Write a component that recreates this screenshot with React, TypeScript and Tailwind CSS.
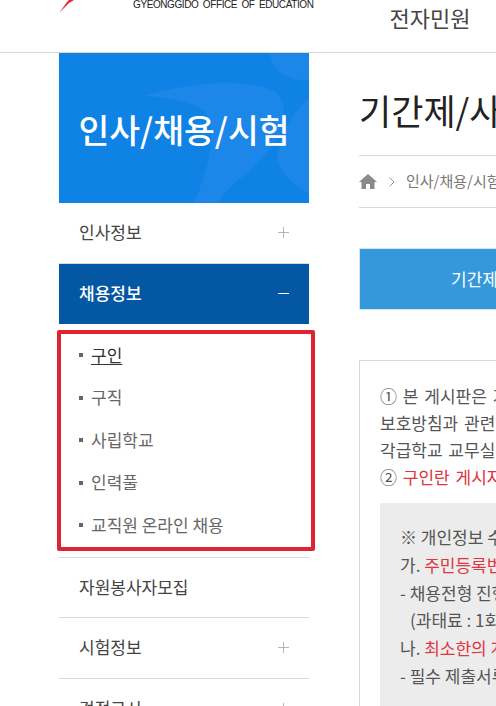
const font = "font-['Noto_Sans_CJK_KR','Liberation_Sans',sans-serif]";

const PlusIcon = () => (
  <svg width="11" height="11" viewBox="0 0 11 11" className="shrink-0">
    <path d="M0 5.5H11M5.5 0V11" stroke="#b5b5b5" strokeWidth="1" fill="none" />
  </svg>
);

const MinusIcon = () => (
  <svg width="11" height="11" viewBox="0 0 11 11" className="shrink-0">
    <path d="M0 5.5H11" stroke="#ffffff" strokeWidth="1" fill="none" />
  </svg>
);

const HomeIcon = () => (
  <svg width="18" height="15" viewBox="0 0 18 15" className="shrink-0">
    <path d="M9 0 L18 8 L15.5 8 L15.5 15 L11 15 L11 10 L7 10 L7 15 L2.5 15 L2.5 8 L0 8 Z" fill="#8a8a8a" />
  </svg>
);

const MenuRow = ({ label, plus = false }: { label: string; plus?: boolean }) => (
  <div className="flex h-[60.5px] items-center justify-between border-b border-[#d9d9d9] px-[20px] text-[17px] text-[#444]">
    <span className="pb-[2px]">{label}</span>
    {plus && <PlusIcon />}
  </div>
);

const subItems = ["구인", "구직", "사립학교", "인력풀", "교직원 온라인 채용"];

const Sidebar = () => (
  <aside className="w-[250px] shrink-0">
    <div className="relative flex h-[150px] items-center justify-center overflow-hidden bg-[#0f82e6] pt-[3px]">
      <svg width="250" height="150" viewBox="0 0 250 150" className="absolute left-0 top-0">
        <path d="M211 0 C213 18 228 28 250 27 L250 0 Z" fill="#1c87e8" />
        <path d="M85 43 C130 29 190 25 215 38 C230 48 228 75 212 95 C190 122 165 135 160 150 L135 150 C150 115 160 75 145 58 C130 47 105 44 85 43 Z" fill="#1c87e8" />
        <path d="M250 45 C232 60 220 85 218 105 C222 122 235 133 250 140 Z" fill="#1c87e8" />
      </svg>
      <span className="relative text-[33.5px] font-medium text-white">인사/채용/시험</span>
    </div>
    <MenuRow label="인사정보" plus />
    <div className="flex h-[60.5px] items-center justify-between bg-[#0457a3] px-[20px] text-[17px] font-medium text-white">
      <span className="pb-[2px]">채용정보</span>
      <MinusIcon />
    </div>
    <ul className="mt-[6px] -ml-[2px] w-[258px] rounded-[2px] border-[4px] border-[#df2330]">
      {subItems.map((item, i) => (
        <li key={item} className="flex h-[42.5px] items-center pl-[18px] text-[17px] text-[#666]">
          <span className="mr-[8px] h-[4px] w-[4px] bg-[#666]" />
          <span className={i === 0 ? "pb-[2px] text-[#333] underline underline-offset-2" : "pb-[2px]"}>{item}</span>
        </li>
      ))}
    </ul>
    <div className="mt-[6px] border-t border-[#d9d9d9]">
      <MenuRow label="자원봉사자모집" />
      <MenuRow label="시험정보" plus />
      <MenuRow label="검정고시" plus />
    </div>
  </aside>
);

const Main = () => (
  <main className="w-[800px] shrink-0 whitespace-nowrap">
    <h1 className="flex h-[102px] items-center pt-[12px] text-[35px] font-normal text-[#222]">기간제/사립교사 채용</h1>
    <div className="flex h-[53px] items-center border-y border-[#d9d9d9] text-[15px] text-[#777]">
      <HomeIcon />
      <svg width="6" height="10" viewBox="0 0 6 10" className="ml-[12px] mr-[11px]">
        <path d="M0.5 0.5L5 5L0.5 9.5" stroke="#999" strokeWidth="1" fill="none" />
      </svg>
      <span>인사/채용/시험</span>
    </div>
    <div className="mt-[40px] flex h-[62px] items-center border border-[#cfe6f5] bg-[#3498db] pl-[91px] text-[17px] text-white">
      기간제 교사 채용 공고
    </div>
    <div className="mt-[50px] border border-[#d9d9d9] px-[20px] pt-[21px] text-[17px] leading-[27px] text-[#555] [word-spacing:2px]">
      <p>① 본 게시판은 기간제 교사 채용 공고</p>
      <p>보호방침과 관련하여</p>
      <p>각급학교 교무실로 문의</p>
      <p>
        ② <span className="text-[#e0343f]">구인란 게시자는</span>
      </p>
      <div className="mt-[13px] h-[300px] bg-[#ececec] px-[20px] pt-[20px] leading-[27.8px] [word-spacing:0px]">
        <p>※ 개인정보 수집</p>
        <p>
          가. <span className="text-[#e0343f]">주민등록번호</span>
        </p>
        <p>- 채용전형 진행</p>
        <p className="pl-[10px]">(과태료 : 1회</p>
        <p>
          나. <span className="text-[#e0343f]">최소한의 개인</span>
        </p>
        <p>- 필수 제출서류</p>
      </div>
    </div>
  </main>
);

export default function App() {
  return (
    <div className={`h-[706px] w-[496px] overflow-hidden bg-white ${font}`}>
      <header className="flex h-[53px] items-start overflow-hidden border-b border-[#d9d9d9] pl-[59px]">
        <svg width="16" height="13" viewBox="0 0 16 13" className="shrink-0">
          <path d="M0.5 12.5 L10 3 L15 0 L10 0 L8 2 Z" fill="#e8232b" />
        </svg>
        <span className="ml-[58px] mt-[-1px] whitespace-nowrap font-['Liberation_Sans',sans-serif] text-[10px] font-medium leading-[12px] tracking-[-0.4px] text-[#222] [word-spacing:2px]">
          GYEONGGIDO OFFICE OF EDUCATION
        </span>
        <span className="ml-[76px] mt-[2px] whitespace-nowrap text-[22px] font-normal leading-[30px] text-[#444]">전자민원</span>
      </header>
      <div className="flex gap-[50px] pl-[59px]">
        <Sidebar />
        <Main />
      </div>
    </div>
  );
}
